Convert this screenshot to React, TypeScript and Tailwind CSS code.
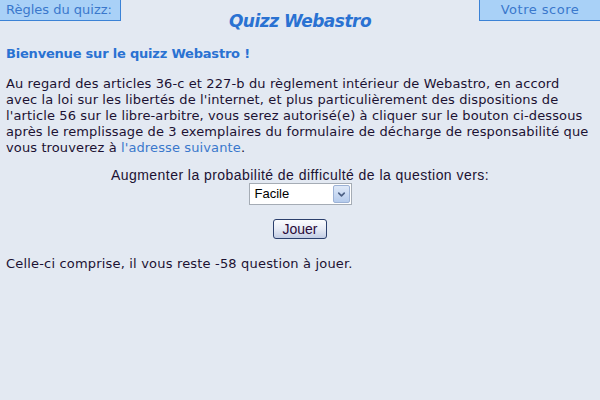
import { ChevronDown } from 'lucide-react';

export default function App() {
  return (
    <div className="w-[600px] h-[400px] bg-[#e3e9f2] text-[#1c1233] font-['Verdana','DejaVu_Sans',sans-serif] text-[13px] overflow-hidden">
      {/* Header */}
      <div className="flex items-start justify-between h-[38px]">
        <div className="w-[121px] h-[21px] bg-[#a9d1f7] border-r border-b border-[#3b82d6] text-[#3a78cc] text-[13px] leading-[19px] pl-[6px]">
          Règles du quizz:
        </div>
        <h1 className="mt-[10px] text-[17px] leading-[22px] font-bold italic tracking-[-0.5px] text-[#2a72d2]">Quizz Webastro</h1>
        <div className="w-[121px] h-[21px] bg-[#a9d1f7] border-l border-b border-[#3b82d6] text-[#3a78cc] text-[13px] leading-[19px] text-center tracking-[0.5px]">
          Votre score
        </div>
      </div>

      <div className="px-[6px]">
        <p className="mt-[8px] font-bold tracking-[-0.2px] text-[#2a72d2] leading-[16px]">Bienvenue sur le quizz Webastro !</p>

        <p className="mt-[14px] leading-[16px] tracking-[0.12px] whitespace-nowrap">
          Au regard des articles 36-c et 227-b du règlement intérieur de Webastro, en accord
          <br />
          avec la loi sur les libertés de l'internet, et plus particulièrement des dispositions de
          <br />
          l'article 56 sur le libre-arbitre, vous serez autorisé(e) à cliquer sur le bouton ci-dessous
          <br />
          après le remplissage de 3 exemplaires du formulaire de décharge de responsabilité que
          <br />
          vous trouverez à <a className="text-[#3a78cc]">l'adresse suivante</a>.
        </p>
      </div>

      <div className="mt-[12px] flex flex-col items-center font-['Liberation_Sans','Arial',sans-serif] text-[13px]">
        <div className="text-[14px] leading-[15px] tracking-[0.45px]">Augmenter la probabilité de difficulté de la question vers:</div>
        <div className="mt-0 w-[103px] h-[22px] bg-white border border-[#a5acb5] flex items-center justify-between pl-[5px] pr-[1px]">
          <span className="text-black">Facile</span>
          <span className="w-[17px] h-[18px] bg-gradient-to-b from-[#dfe9f8] to-[#b5cbec] border border-[#9cb2d6] rounded-[2px] flex items-center justify-center">
            <ChevronDown size={11} strokeWidth={3.5} className="text-[#4d6185]" />
          </span>
        </div>
        <button className="mt-[14px] w-[54px] h-[20px] rounded-[3px] border border-[#2b3f6c] bg-gradient-to-b from-[#fbfcfe] via-[#e7ebf5] to-[#c2cde4] text-[#2a0a3a] text-[14px] leading-[17px]">
          Jouer
        </button>
      </div>

      <p className="mt-[17px] px-[6px] leading-[16px] tracking-[0.18px]">Celle-ci comprise, il vous reste -58 question à jouer.</p>
    </div>
  );
}
